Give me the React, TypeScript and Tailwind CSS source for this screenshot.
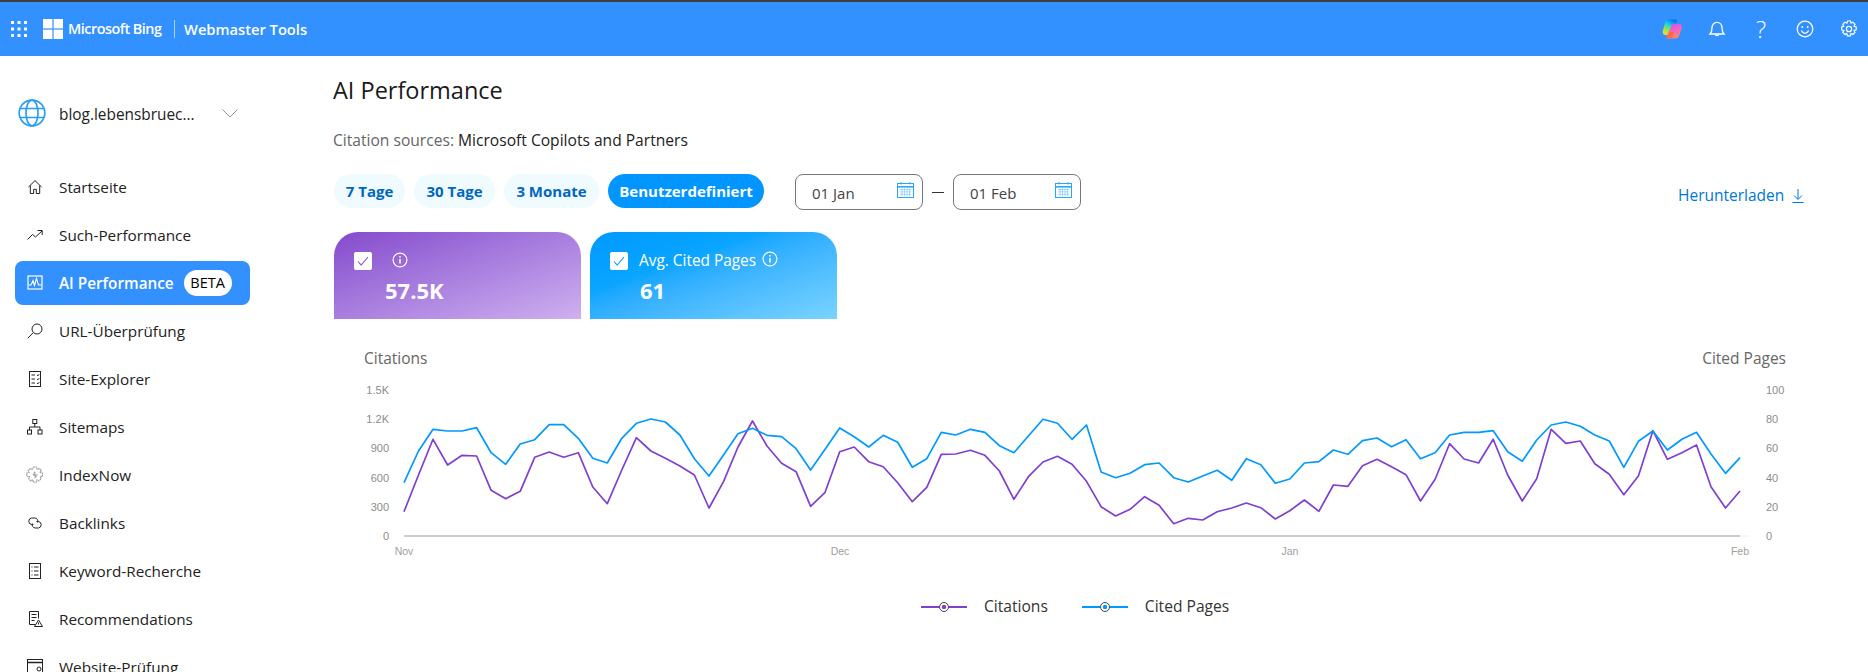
import React from "react";

const font = "font-['Open_Sans','Noto_Sans',sans-serif]";

const blueA = [338,243,178,183,183,173,248,283,222,209,164,164,205,265,279,205,160,147,156,195,266,318,255,191,175,196,200,236,300,238,174,200];
const blueB = [231,196,217,292,266,187,195,178,187,227,248,198,148,160,208,165,306,323,310,284,279,323,336,318,301,331,266,284,340,327,279,275,240,253];
const blueC = [302,294,320,299,356,338,285,277,277,272,335,364,300,255,246,259,285,303,382,304,273,330,298,277,342,400,353];
const purpleA = [425,315,208,285,256,258,361,386,364,262,246,262,248,351,401,300,203,243,265,288,315,414,335,231,153,228,280,305,409,367,245,231];
const purpleB = [275,290,338,395,352,253,252,241,256,303,388,320,276,259,283,334,410,438,418,380,406,461,445,450,425,414,399,413,447,422,390,424,345,349];
const purpleC = [377,358,380,404,483,418,311,357,369,298,405,483,416,268,310,303,371,403,464,408,272,358,338,315,440,504,453];

const toPoints = (a: number[], b: number[], c: number[]) =>
  [...a.map((v) => 370 + v / 3), ...b.map((v) => 370 + v / 3), ...c.map((v) => 340 + v / 3)]
    .map((y, i) => `${(404 + i * 14.522).toFixed(1)},${y.toFixed(1)}`)
    .join(" ");

const S = ({ children, className = "" }: { children: React.ReactNode; className?: string }) => (
  <svg viewBox="0 0 16 16" fill="none" stroke="currentColor" strokeWidth="1" className={`h-4 w-4 ${className}`}>
    {children}
  </svg>
);

const nav: { label: string; icon: React.ReactNode }[] = [
  { label: "Startseite", icon: <S><path d="M1.5 8 8 1.6 14.5 8M3.3 6.5v8h3.4v-4.2h2.6v4.2h3.4v-8" /></S> },
  { label: "Such-Performance", icon: <S><path d="M0.5 12.5 5.5 7.5 8.5 10 15 4M10.5 3.5H15.2V8" /></S> },
  {
    label: "AI Performance",
    icon: <S><rect x="1" y="1" width="14" height="13" strokeWidth="1.2" /><path d="M1.5 10h2.5l2-4.5 1.5 5 2-7 2 6.5h3" strokeWidth="1.1" /></S>,
  },
  { label: "URL-Überprüfung", icon: <S><circle cx="10" cy="6" r="5" /><path d="M6.3 9.6 0.8 15.2" /></S> },
  {
    label: "Site-Explorer",
    icon: <S><rect x="2.5" y="0.5" width="11" height="15" /><path d="M4.5 4h3.5M10 4l1 .8 1.2-1.6M4.5 8h3.5M10 8l1 .8 1.2-1.6M4.5 12h3.5M10 12l1 .8 1.2-1.6" /></S>,
  },
  {
    label: "Sitemaps",
    icon: <S><rect x="5.8" y="0.5" width="4" height="4" /><rect x="0.5" y="11" width="4" height="4" /><rect x="11" y="11" width="4" height="4" /><path d="M7.8 4.5V8M2.5 11V8h10.5v3" /></S>,
  },
  {
    label: "IndexNow",
    icon: (
      <svg viewBox="0 0 18 18" fill="none" stroke="#999" strokeWidth="1.1" strokeDasharray="1.6 0.5" className="-ml-px h-[18px] w-[18px] shrink-0">
        <path d="M7.5 1h3l.6 2.3 2-.9 2.1 2.1-1 2 2.3.7v3l-2.3.6.9 2-2.1 2.1-2-1-.7 2.3h-3l-.6-2.3-2 .9-2.1-2.1 1-2L.8 10.1v-3l2.3-.6-.9-2 2.1-2.1 2 1z" />
        <path d="M9 5.800 7 9.200h2.400l-.4 3 2-3.400H8.600z" />
      </svg>
    ),
  },
  {
    label: "Backlinks",
    icon: <S><path d="M6.5 9.5H4.500a3.300 3.300 0 0 1 0-6.500h3.200a3.300 3.300 0 0 1 3 4.500" /><path d="M9.500 6.500h2a3.300 3.300 0 0 1 0 6.500H8.300a3.300 3.300 0 0 1-3-4.500" /></S>,
  },
  {
    label: "Keyword-Recherche",
    icon: <S><rect x="2.5" y="0.5" width="11" height="15" /><path d="M4.500 4h1M7 4h4.500M4.500 8h1M7 8h4.500M4.500 12h1M7 12h4.500" /></S>,
  },
  {
    label: "Recommendations",
    icon: <S><path d="M8 13.500H2.500V0.500h9v7" /><path d="M4.500 3.500h5M4.500 6.500h5M4.500 9.500h3" /><path d="M11.500 9 15.500 15.500h-8zM11.500 11.500v2" /></S>,
  },
  {
    label: "Website-Prüfung",
    icon: <S><rect x="0.5" y="0.5" width="15" height="14" /><path d="M0.500 3.500h15" strokeWidth="1.5" /><circle cx="12" cy="10" r="2" /></S>,
  },
];

const GridIcon = () => (
  <svg viewBox="0 0 16 16" className="h-4 w-4" fill="#fff">
    {[1.5, 8, 14.5].flatMap((y) => [1.5, 8, 14.5].map((x) => <rect key={`${x}-${y}`} x={x - 1.5} y={y - 1.5} width="3" height="3" />))}
  </svg>
);

const WindowsLogo = () => (
  <svg viewBox="0 0 20 20" className="h-5 w-5" fill="#fff">
    <rect x="0" y="0" width="9.4" height="9.4" />
    <rect x="10.6" y="0" width="9.4" height="9.4" />
    <rect x="0" y="10.6" width="9.4" height="9.4" />
    <rect x="10.6" y="10.6" width="9.4" height="9.4" />
  </svg>
);

const Copilot = () => (
  <svg viewBox="0 0 22 22" className="h-[22px] w-[22px]">
    <defs>
      <linearGradient id="cpA" x1="0.7" y1="0" x2="0.2" y2="1">
        <stop offset="0" stopColor="#0a6cf0" />
        <stop offset="0.35" stopColor="#14d0e8" />
        <stop offset="0.7" stopColor="#a6e23c" />
        <stop offset="1" stopColor="#ffd23a" />
      </linearGradient>
      <linearGradient id="cpB" x1="0.3" y1="0" x2="0.7" y2="1">
        <stop offset="0" stopColor="#d650ef" />
        <stop offset="0.6" stopColor="#f76bb0" />
        <stop offset="1" stopColor="#ff8f5a" />
      </linearGradient>
    </defs>
    <path d="M7 1.500h7.500c1.300 0 1.600 1.200 1.200 2.200L11 17H5c-2.500 0-4-2-3-5L4.500 3.500C5 2.200 5.800 1.500 7 1.500z" fill="url(#cpA)" />
    <path d="M12 6h6.500c1.700 0 2.800 1.500 2.300 3.500L18.500 17c-.6 2-2 3.500-4 3.500H7c-1.200 0-1.700-1.200-1.200-2.300L11 7c.2-.6.500-1 1-1z" fill="url(#cpB)" />
    <path d="M9 14h4l-1.500 4.500c-.3.900-.9 2-2 2H7c-1.200 0-1.700-1.200-1.200-2.300z" fill="#ff6a3d" />
  </svg>
);

const Bell = () => (
  <svg viewBox="0 0 18 18" className="h-[18px] w-[18px]" fill="none" stroke="#fff" strokeWidth="1.3">
    <path d="M2 14c1.600-1.500 2-3 2-6 0-3.300 2.200-5.700 5-5.700s5 2.400 5 5.700c0 3 .4 4.500 2 6z" />
    <path d="M7.300 14.500a1.800 1.800 0 0 0 3.400 0" />
  </svg>
);

const Smiley = () => (
  <svg viewBox="0 0 18 18" className="h-[18px] w-[18px]" fill="none" stroke="#fff" strokeWidth="1.2">
    <circle cx="9" cy="9" r="7.8" />
    <circle cx="6.3" cy="7" r=".9" fill="#fff" stroke="none" />
    <circle cx="11.7" cy="7" r=".9" fill="#fff" stroke="none" />
    <path d="M5.300 10.500c1 2 2.300 2.800 3.700 2.800s2.700-.8 3.700-2.800" />
  </svg>
);

const Gear = () => (
  <svg viewBox="0 0 18 18" className="h-[18px] w-[18px]" fill="none" stroke="#fff" strokeWidth="1.2">
    <path d="M7.500 1h3l.5 2.200 1.900-1 2.100 2.100-1 2 2.200.6v3l-2.200.6 1 1.900-2.100 2.100-2-1-.5 2.300h-3l-.6-2.300-1.900 1-2.100-2.100 1-1.900-2.100-.6v-3l2.100-.6-1-2 2.100-2.100 2 1z" />
    <circle cx="9" cy="9" r="2.6" />
  </svg>
);

const Globe = () => (
  <svg viewBox="0 0 28 28" className="h-7 w-7" fill="none" stroke="#2b9df4" strokeWidth="1.7">
    <circle cx="14" cy="14" r="12.8" />
    <ellipse cx="14" cy="14" rx="6" ry="12.8" />
    <path d="M2.400 9.500h23.200M2.400 18.500h23.200" />
  </svg>
);

const Calendar = () => (
  <svg viewBox="0 0 17 16" className="h-4 w-[17px]" fill="none" stroke="#2ba6f5" strokeWidth="1">
    <rect x="0.5" y="1.5" width="16" height="14" />
    <path d="M0.5 4.800h16" strokeWidth="1.6" />
    <path d="M4 0v2.500M13 0v2.500" />
    <path d="M3 7.500h11M3 9.800h11M3 12.300h11M5 6.500v7.500M7.500 6.500v7.500M10 6.500v7.500M12.500 6.500v7.500" strokeWidth=".7" strokeOpacity=".55" />
  </svg>
);

const Info = () => (
  <svg viewBox="0 0 16 16" className="h-4 w-4" fill="none" stroke="#fff" strokeWidth="1.2">
    <circle cx="8" cy="8" r="6.9" />
    <path d="M8 7v4.500" strokeWidth="1.5" />
    <circle cx="8" cy="4.8" r=".9" fill="#fff" stroke="none" />
  </svg>
);

const Check = ({ color }: { color: string }) => (
  <span className="flex h-[18px] w-[18px] shrink-0 items-center justify-center rounded-[2px] bg-white">
    <svg viewBox="0 0 12 12" className="h-3 w-3" fill="none" stroke={color} strokeWidth="1.1">
      <path d="M1 6.500 4.200 10 11 2" />
    </svg>
  </span>
);

const LegendMark = ({ color }: { color: string }) => (
  <svg viewBox="0 0 46 12" className="h-3 w-[46px]">
    <path d="M0 6h18M28 6h18" stroke={color} strokeWidth="2" />
    <circle cx="23" cy="6" r="4.5" fill="#fff" stroke="#444" strokeWidth="1" />
    <circle cx="23" cy="6" r="2.2" fill={color} />
  </svg>
);

const Pill = ({ label, w, active }: { label: string; w: string; active?: boolean }) => (
  <div
    className={`flex h-[34px] items-center justify-center rounded-full text-[15px] font-bold ${w} ${
      active ? "bg-[#0095ff] text-white" : "bg-[#f0fbff] text-[#0067c0]"
    }`}
  >
    {label}
  </div>
);

const DateBox = ({ label }: { label: string }) => (
  <div className="flex h-9 w-[128px] items-center justify-between rounded-lg border border-[#777] pl-4 pr-2 text-[15px] text-[#444]">
    <span className="mt-[2px]">{label}</span>
    <span className="-mt-[4px]"><Calendar /></span>
  </div>
);

export default function App() {
  const leftTicks = ["0", "300", "600", "900", "1.2K", "1.5K"];
  const rightTicks = ["0", "20", "40", "60", "80", "100"];
  const yOf = (i: number) => 536 - i * 29.2;
  return (
    <div className={`flex h-[672px] w-full flex-col overflow-hidden bg-white ${font}`}>
      <header className="flex h-[56px] shrink-0 items-center border-t-2 border-[#3c3c3c] bg-[#3390ff] pl-[11px] text-white">
        <GridIcon />
        <span className="ml-4"><WindowsLogo /></span>
        <span className="ml-[5px] w-[95px] whitespace-nowrap text-[14.4px] font-semibold tracking-[-0.5px]">Microsoft Bing</span>
        <span className="ml-[11px] h-[18px] w-px bg-[#a9cfff]" />
        <span className="ml-[9px] text-[14.7px] font-semibold">Webmaster Tools</span>
        <div className="ml-auto flex items-center gap-[26px] pr-[10px]">
          <span className="mr-[-1px]"><Copilot /></span>
          <Bell />
          <span className="flex h-[18px] w-[18px] items-center justify-center text-[24px] font-light leading-none">?</span>
          <Smiley />
          <Gear />
        </div>
      </header>

      <div className="flex min-h-0 flex-1">
        <aside className="w-[333px] shrink-0 pl-[15px]">
          <div className="mt-[43px] flex h-7 items-center pl-[3px]">
            <Globe />
            <span className="ml-[13px] mt-[3px] text-[15.4px] text-[#222]">blog.lebensbruec...</span>
            <svg viewBox="0 0 16 9" className="ml-[27px] h-[9px] w-4" fill="none" stroke="#888" strokeWidth="0.9">
              <path d="M0.5 .5 8 8 15.500 .5" />
            </svg>
          </div>
          <nav className="mt-[38px] flex w-[235px] flex-col gap-1">
            {nav.map((n) => {
              const active = n.label === "AI Performance";
              return (
                <div
                  key={n.label}
                  className={`flex h-11 shrink-0 items-center rounded-lg pl-3 text-[15.3px] ${
                    active ? "bg-[#3390ff] font-semibold text-white" : "text-[#222]"
                  }`}
                >
                  <span className="flex h-4 w-4 shrink-0 items-center justify-center">{n.icon}</span>
                  <span className="ml-4 whitespace-nowrap">{n.label}</span>
                  {active && (
                    <span className="ml-[10px] flex h-[26px] w-12 items-center justify-center rounded-full bg-white text-[14.5px] font-medium text-black">
                      BETA
                    </span>
                  )}
                </div>
              );
            })}
          </nav>
        </aside>

        <main className="min-w-0 flex-1">
          <h1 className="mt-5 h-7 text-[23.5px] font-medium leading-7 text-[#1a1a1a]">AI Performance</h1>
          <p className="mt-[26px] h-5 text-[15.6px] leading-5 text-[#666]">
            Citation sources: <span className="font-medium text-[#222]">Microsoft Copilots and Partners</span>
          </p>
          <div className="mt-6 flex h-9 items-start">
            <div className="flex gap-[9px] pl-px">
              <Pill label="7 Tage" w="w-[71px]" />
              <Pill label="30 Tage" w="w-[81px]" />
              <Pill label="3 Monate" w="w-[95px]" />
              <Pill label="Benutzerdefiniert" w="w-[156px]" active />
            </div>
            <div className="ml-[31px] flex items-center">
              <DateBox label="01 Jan" />
              <span className="mx-[9px] h-px w-3 bg-[#333]" />
              <DateBox label="01 Feb" />
            </div>
            <div className="ml-[597px] mt-[10px] flex items-center gap-2 text-[15.5px] font-medium text-[#0078d4]">
              <span>Herunterladen</span>
              <svg viewBox="0 0 12 16" className="h-4 w-3" fill="none" stroke="#0078d4" strokeWidth="1">
                <path d="M6 1v10M2 7.500 6 11.500 10 7.500M0.500 14.500h11" />
              </svg>
            </div>
          </div>
          <div className="mt-[22px] flex gap-[9px] pl-px">
            <div className="flex h-[87px] w-[247px] items-start rounded-t-[24px] bg-gradient-to-br from-[#8549cc] to-[#cfb0ef] pl-5 pt-5 text-white">
              <Check color="#8549cc" />
              <div className="ml-[13px]">
                <div className="ml-[7px] flex h-4 items-center"><Info /></div>
                <div className="mt-[8px] text-[22px] font-bold leading-7">57.5K</div>
              </div>
            </div>
            <div className="flex h-[87px] w-[247px] items-start rounded-t-[24px] bg-gradient-to-br from-[#0099ff] via-[#0aa5ff] via-35% to-[#78d4ff] pl-5 pt-5 text-white">
              <Check color="#0099ff" />
              <div className="ml-[11px]">
                <div className="flex h-4 items-center gap-[6px] text-[15.4px]">
                  <span className="mt-[2px]">Avg. Cited Pages</span>
                  <span className="-mt-[2px]"><Info /></span>
                </div>
                <div className="ml-px mt-[8px] text-[22px] font-bold leading-7">61</div>
              </div>
            </div>
          </div>
          <div className="mt-[29px] flex h-5 justify-between pl-[31px] pr-[82px] text-[15.5px] leading-5 text-[#666]">
            <span>Citations</span>
            <span>Cited Pages</span>
          </div>
          <svg viewBox="333 372 1535 188" className="mt-1 block h-[188px] w-[1535px]">
            <g fontFamily="'Liberation Sans', sans-serif" fontSize="11" fill="#8c8c8c" fontWeight="300">
              {leftTicks.map((t, i) => (
                <text key={t} x="389" y={yOf(i) + 4} textAnchor="end">{t}</text>
              ))}
              {rightTicks.map((t, i) => (
                <text key={t} x="1766" y={yOf(i) + 4}>{t}</text>
              ))}
            </g>
            <g fontFamily="'Liberation Sans', sans-serif" fontSize="10.5" fill="#a0a0a0" textAnchor="middle">
              <text x="404" y="555">Nov</text>
              <text x="840" y="555">Dec</text>
              <text x="1290" y="555">Jan</text>
              <text x="1740" y="555">Feb</text>
            </g>
            <path d="M1740 536h10" stroke="#eeeeee" strokeWidth="1" />
            <path d="M404 536h1336" stroke="#999999" strokeWidth="1.2" />
            <polyline points={toPoints(purpleA, purpleB, purpleC)} fill="none" stroke="#7f3fcf" strokeWidth="1.7" strokeLinejoin="round" />
            <polyline points={toPoints(blueA, blueB, blueC)} fill="none" stroke="#0099ff" strokeWidth="1.7" strokeLinejoin="round" />
          </svg>
          <div className="mt-[37px] flex h-5 items-center pl-[588px] text-[15.6px] text-[#333]">
            <LegendMark color="#7f3fcf" />
            <span className="ml-[17px]">Citations</span>
            <span className="ml-[34px]"><LegendMark color="#0099ff" /></span>
            <span className="ml-[17px]">Cited Pages</span>
          </div>
        </main>
      </div>
    </div>
  );
}
